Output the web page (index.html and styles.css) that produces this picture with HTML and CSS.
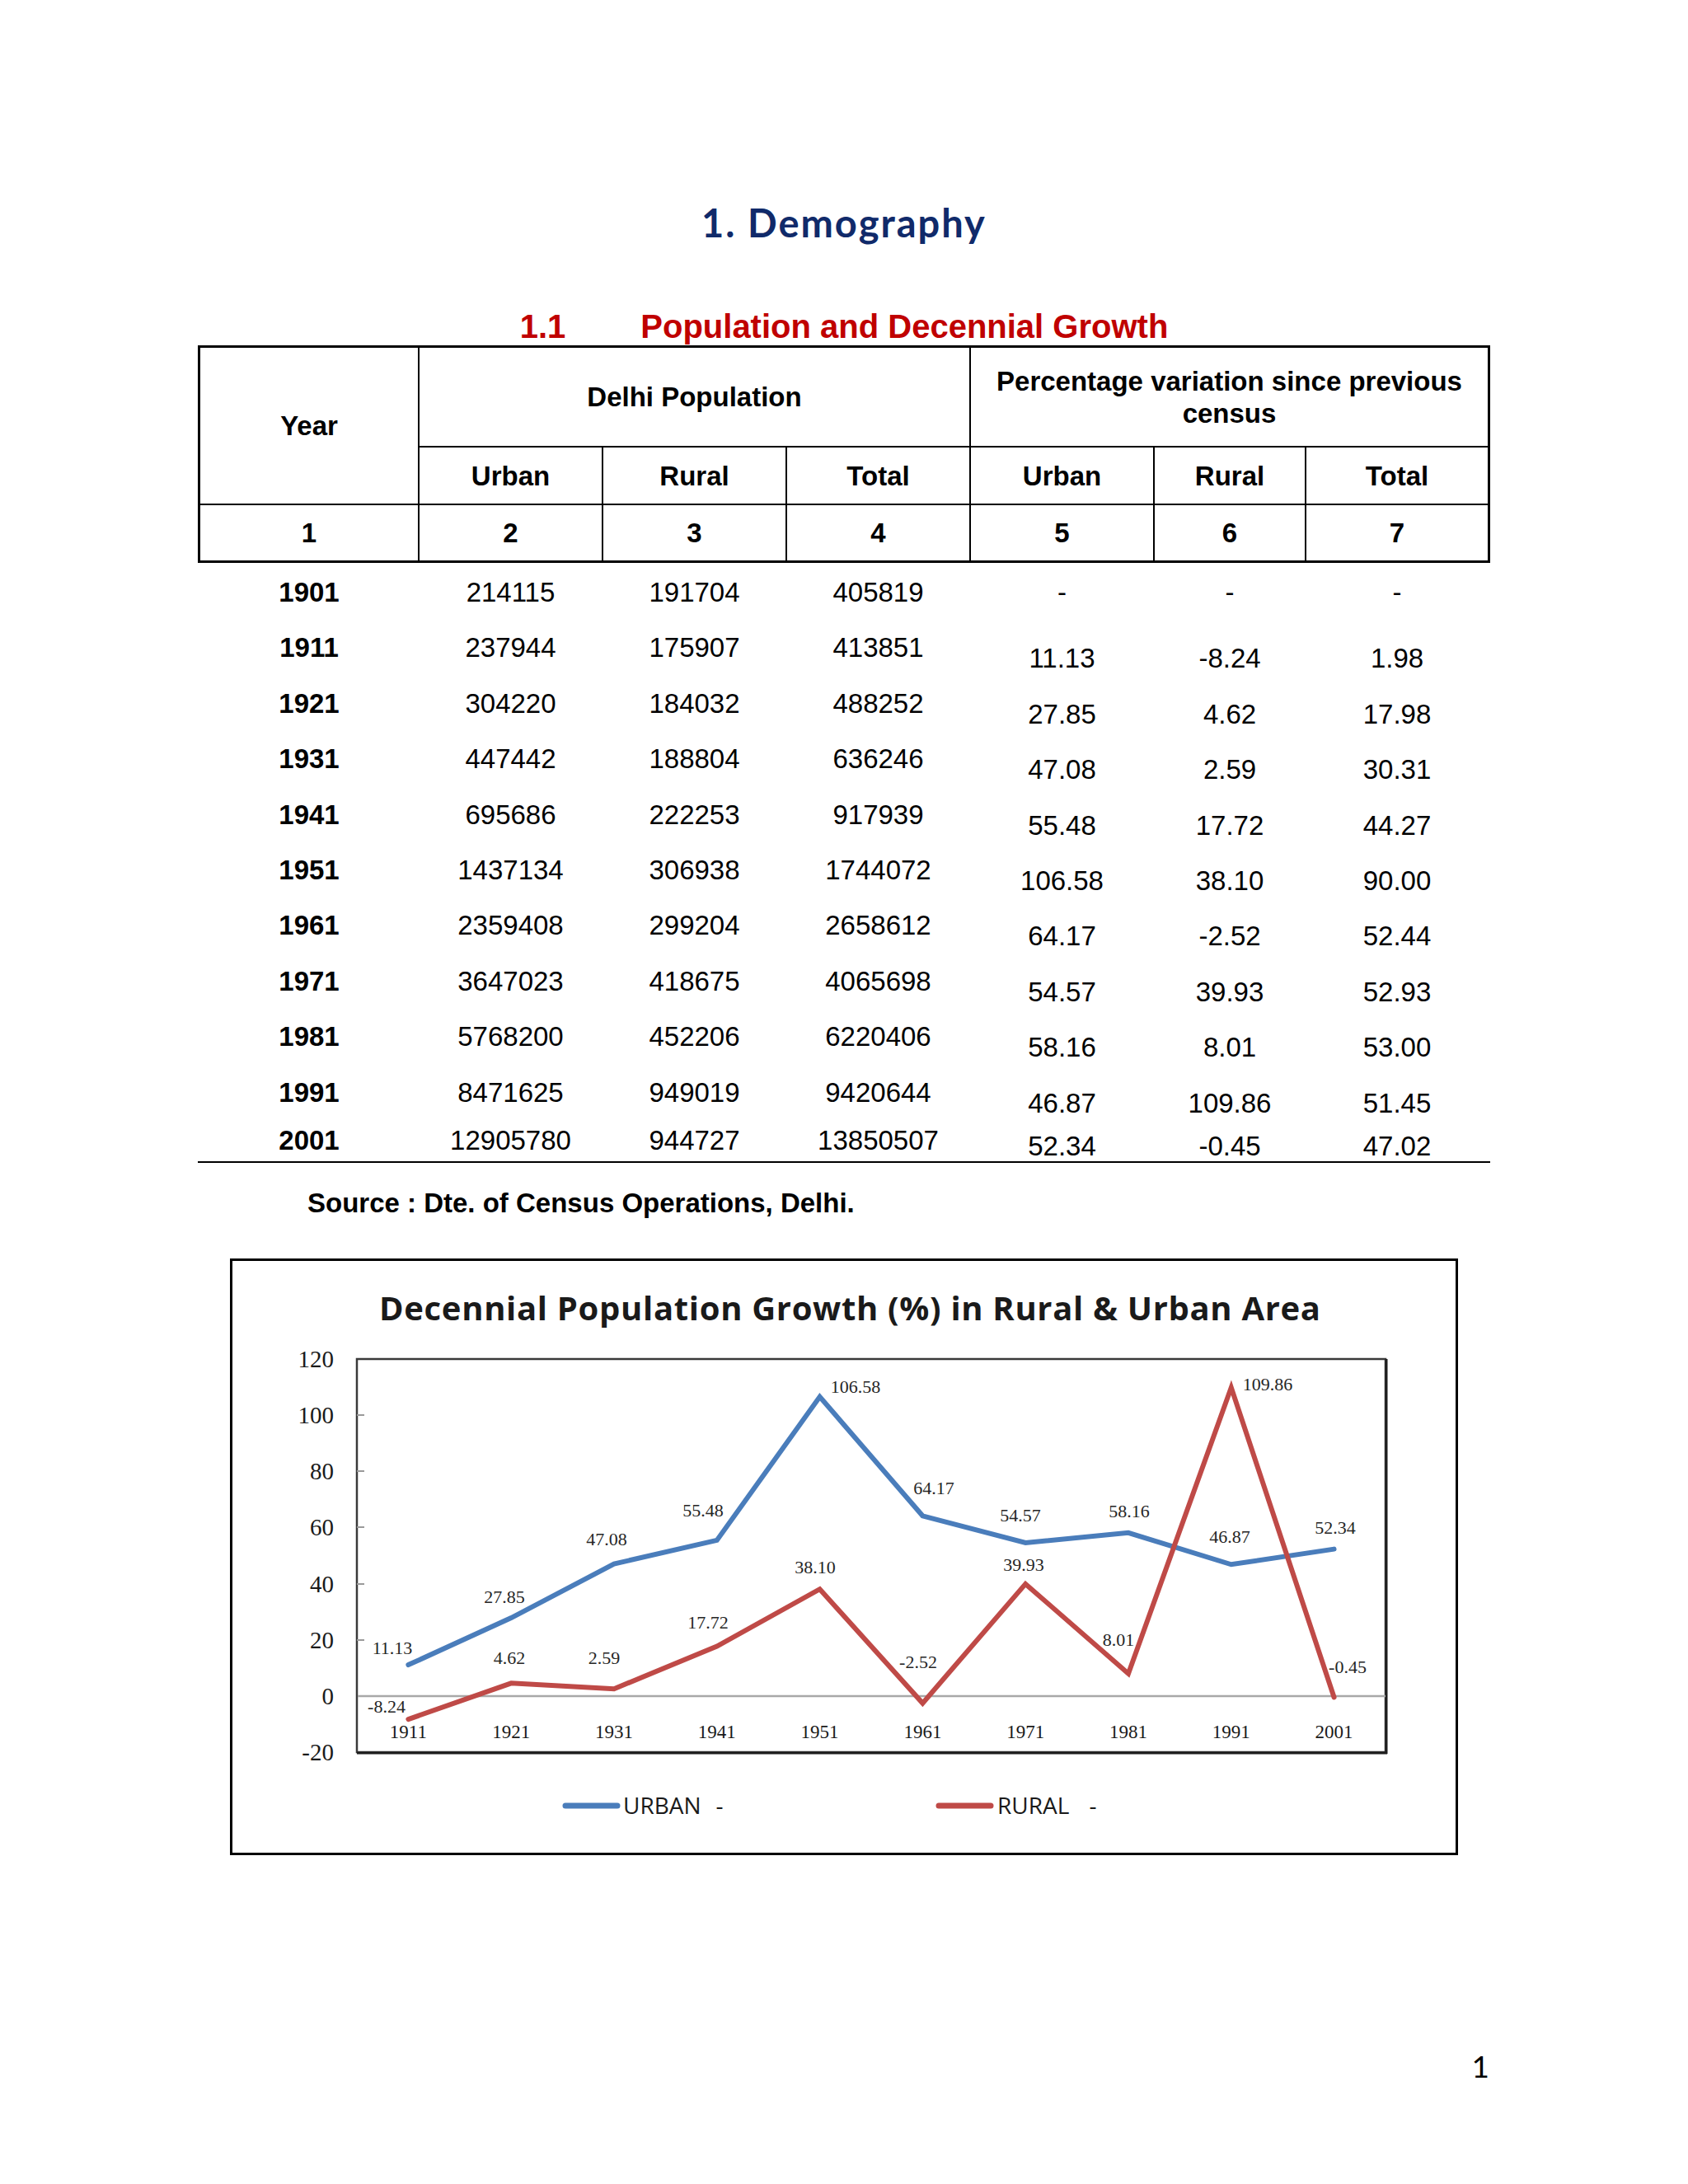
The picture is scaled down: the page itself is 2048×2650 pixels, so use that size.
FILE: index.html
```html
<!DOCTYPE html>
<html lang="en">
<head>
<meta charset="utf-8">
<title>1. Demography</title>
<link rel="stylesheet" href="styles.css">
</head>
<body>
<div class="page">
  <h1 class="title">1. Demography</h1>
  <h2 class="subtitle"><span>1.1</span><span>Population and Decennial Growth</span></h2>

  <div class="thead">
    <div class="hcell year">Year</div>
    <div class="hcell grp1">Delhi Population</div>
    <div class="hcell grp2">Percentage variation since previous census</div>
    <div class="hcell">Urban</div>
    <div class="hcell">Rural</div>
    <div class="hcell">Total</div>
    <div class="hcell">Urban</div>
    <div class="hcell">Rural</div>
    <div class="hcell">Total</div>
    <div class="hcell">1</div>
    <div class="hcell">2</div>
    <div class="hcell">3</div>
    <div class="hcell">4</div>
    <div class="hcell">5</div>
    <div class="hcell">6</div>
    <div class="hcell">7</div>
  </div>

  <div class="tbody">
    <div class="row first"><div class="cell yr">1901</div><div class="cell">214115</div><div class="cell">191704</div><div class="cell">405819</div><div class="cell pct">-</div><div class="cell pct">-</div><div class="cell pct">-</div></div>
    <div class="row"><div class="cell yr">1911</div><div class="cell">237944</div><div class="cell">175907</div><div class="cell">413851</div><div class="cell pct">11.13</div><div class="cell pct">-8.24</div><div class="cell pct">1.98</div></div>
    <div class="row"><div class="cell yr">1921</div><div class="cell">304220</div><div class="cell">184032</div><div class="cell">488252</div><div class="cell pct">27.85</div><div class="cell pct">4.62</div><div class="cell pct">17.98</div></div>
    <div class="row"><div class="cell yr">1931</div><div class="cell">447442</div><div class="cell">188804</div><div class="cell">636246</div><div class="cell pct">47.08</div><div class="cell pct">2.59</div><div class="cell pct">30.31</div></div>
    <div class="row"><div class="cell yr">1941</div><div class="cell">695686</div><div class="cell">222253</div><div class="cell">917939</div><div class="cell pct">55.48</div><div class="cell pct">17.72</div><div class="cell pct">44.27</div></div>
    <div class="row"><div class="cell yr">1951</div><div class="cell">1437134</div><div class="cell">306938</div><div class="cell">1744072</div><div class="cell pct">106.58</div><div class="cell pct">38.10</div><div class="cell pct">90.00</div></div>
    <div class="row"><div class="cell yr">1961</div><div class="cell">2359408</div><div class="cell">299204</div><div class="cell">2658612</div><div class="cell pct">64.17</div><div class="cell pct">-2.52</div><div class="cell pct">52.44</div></div>
    <div class="row"><div class="cell yr">1971</div><div class="cell">3647023</div><div class="cell">418675</div><div class="cell">4065698</div><div class="cell pct">54.57</div><div class="cell pct">39.93</div><div class="cell pct">52.93</div></div>
    <div class="row"><div class="cell yr">1981</div><div class="cell">5768200</div><div class="cell">452206</div><div class="cell">6220406</div><div class="cell pct">58.16</div><div class="cell pct">8.01</div><div class="cell pct">53.00</div></div>
    <div class="row"><div class="cell yr">1991</div><div class="cell">8471625</div><div class="cell">949019</div><div class="cell">9420644</div><div class="cell pct">46.87</div><div class="cell pct">109.86</div><div class="cell pct">51.45</div></div>
    <div class="row last"><div class="cell yr">2001</div><div class="cell">12905780</div><div class="cell">944727</div><div class="cell">13850507</div><div class="cell pct">52.34</div><div class="cell pct">-0.45</div><div class="cell pct">47.02</div></div>
  </div>

  <p class="source">Source : Dte. of Census Operations, Delhi.</p>

  <div class="chart">
    <svg class="chart-svg" width="1484" height="718" viewBox="282 1530 1484 718" xmlns="http://www.w3.org/2000/svg">
      <text class="ct-title" x="1031" y="1602" text-anchor="middle" textLength="1142" lengthAdjust="spacing">Decennial Population Growth (%) in Rural &amp; Urban Area</text>

      <rect x="433" y="1649" width="1248" height="477" fill="#fff" stroke="#3a3a3a" stroke-width="2.5"/>
      <line x1="433" y1="2127" x2="1683" y2="2127" stroke="#1e1e1e" stroke-width="3"/>
      <line x1="1682" y1="1649" x2="1682" y2="2128" stroke="#1e1e1e" stroke-width="3"/>
      <line x1="434" y1="2058" x2="1681" y2="2058" stroke="#a8a8a8" stroke-width="2.5"/>

      <g stroke="#9a9a9a" stroke-width="2">
        <line x1="433" y1="1717" x2="442" y2="1717"/>
        <line x1="433" y1="1785" x2="442" y2="1785"/>
        <line x1="433" y1="1853" x2="442" y2="1853"/>
        <line x1="433" y1="1922" x2="442" y2="1922"/>
        <line x1="433" y1="1990" x2="442" y2="1990"/>
      </g>

      <g class="ct-ylab" text-anchor="end">
        <text x="405" y="1659">120</text>
        <text x="405" y="1727">100</text>
        <text x="405" y="1795">80</text>
        <text x="405" y="1863">60</text>
        <text x="405" y="1932">40</text>
        <text x="405" y="2000">20</text>
        <text x="405" y="2068">0</text>
        <text x="405" y="2136">-20</text>
      </g>

      <g class="ct-xlab" text-anchor="middle">
        <text x="495.4" y="2109">1911</text>
        <text x="620.2" y="2109">1921</text>
        <text x="745" y="2109">1931</text>
        <text x="869.8" y="2109">1941</text>
        <text x="994.6" y="2109">1951</text>
        <text x="1119.4" y="2109">1961</text>
        <text x="1244.2" y="2109">1971</text>
        <text x="1369" y="2109">1981</text>
        <text x="1493.8" y="2109">1991</text>
        <text x="1618.6" y="2109">2001</text>
      </g>

      <polyline fill="none" stroke="#4a7dbb" stroke-width="6" stroke-linecap="round" stroke-linejoin="miter"
        points="495.4,2020.1 620.2,1963.1 745,1897.6 869.8,1868.9 994.6,1694.8 1119.4,1839.3 1244.2,1872 1369,1859.8 1493.8,1898.3 1618.6,1879.6"/>
      <polyline fill="none" stroke="#bf4a47" stroke-width="6" stroke-linecap="round" stroke-linejoin="miter"
        points="495.4,2086.1 620.2,2042.3 745,2049.2 869.8,1997.6 994.6,1928.2 1119.4,2066.6 1244.2,1921.9 1369,2030.7 1493.8,1683.6 1618.6,2059.5"/>

      <g class="ct-dlab" text-anchor="middle">
        <text x="476" y="2007">11.13</text>
        <text x="612" y="1945">27.85</text>
        <text x="736" y="1875">47.08</text>
        <text x="853" y="1840">55.48</text>
        <text x="1038" y="1690">106.58</text>
        <text x="1133" y="1813">64.17</text>
        <text x="1238" y="1846">54.57</text>
        <text x="1370" y="1841">58.16</text>
        <text x="1492" y="1872">46.87</text>
        <text x="1620" y="1861">52.34</text>

        <text x="469" y="2078">-8.24</text>
        <text x="618" y="2019">4.62</text>
        <text x="733" y="2019">2.59</text>
        <text x="859" y="1976">17.72</text>
        <text x="989" y="1909">38.10</text>
        <text x="1114" y="2024">-2.52</text>
        <text x="1242" y="1906">39.93</text>
        <text x="1357" y="1997">8.01</text>
        <text x="1538" y="1687">109.86</text>
        <text x="1635" y="2030">-0.45</text>
      </g>

      <line x1="686" y1="2191" x2="749" y2="2191" stroke="#4a7dbb" stroke-width="7" stroke-linecap="round"/>
      <text class="ct-leg" x="756" y="2201">URBAN</text>
      <text class="ct-leg" x="873" y="2201" text-anchor="middle">-</text>
      <line x1="1139" y1="2191" x2="1202" y2="2191" stroke="#bf4a47" stroke-width="7" stroke-linecap="round"/>
      <text class="ct-leg" x="1210" y="2201">RURAL</text>
      <text class="ct-leg" x="1326" y="2201" text-anchor="middle">-</text>
    </svg>
  </div>

  <div class="pageno">1</div>
</div>
</body>
</html>
```

FILE: styles.css
```css
html, body {
  margin: 0;
  padding: 0;
  background: #ffffff;
}

.page {
  width: 1568px;
  margin: 0 auto;
  padding-top: 242px;
  font-family: "Liberation Sans", Arial, sans-serif;
  color: #000;
}

.title {
  margin: 0;
  font-family: Lato, "Noto Sans", sans-serif;
  font-weight: 700;
  font-size: 47px;
  line-height: 56px;
  letter-spacing: 2px;
  color: #102a6a;
  text-align: center;
}

.subtitle {
  margin: 75px 0 0 0;
  display: flex;
  justify-content: center;
  gap: 91px;
  font-family: "Liberation Sans", Arial, sans-serif;
  font-weight: 700;
  font-size: 40px;
  line-height: 46px;
  color: #c00000;
}

.thead {
  display: grid;
  grid-template-columns: 264px 221px 221px 221px 221px 182px 220px;
  grid-template-rows: 119px 68px 67px;
  gap: 2px;
  background: #000;
  border: 3px solid #000;
}

.hcell {
  background: #fff;
  display: flex;
  align-items: center;
  justify-content: center;
  text-align: center;
  font-weight: 700;
  font-size: 33px;
  line-height: 39px;
}

.hcell.year {
  grid-row: 1 / span 2;
}

.hcell.grp1 {
  grid-column: 2 / span 3;
}

.hcell.grp2 {
  grid-column: 5 / span 3;
  padding: 0 20px;
}

.row {
  display: grid;
  grid-template-columns: 264px 221px 221px 221px 221px 182px 220px;
  column-gap: 2px;
  padding: 0 3px;
  height: 67.4px;
  align-items: start;
}

.cell {
  text-align: center;
  font-size: 33px;
  line-height: 38px;
  padding-top: 17px;
}

.cell.yr {
  font-weight: 700;
}

.cell.pct {
  padding-top: 30px;
}

.row.first .cell.pct {
  padding-top: 17px;
}

.row.last {
  height: 52px;
  border-bottom: 2px solid #000;
}

.row.last .cell {
  padding-top: 8px;
}

.row.last .cell.pct {
  padding-top: 15px;
}

.source {
  margin: 30px 0 0 133px;
  font-weight: 700;
  font-size: 33px;
  line-height: 38px;
}

.chart {
  width: 1484px;
  height: 718px;
  border: 3px solid #000;
  margin: 48px auto 0 auto;
  background: #fff;
}

.chart-svg {
  display: block;
}

.ct-title {
  font-family: "Open Sans", "Liberation Sans", sans-serif;
  font-weight: 700;
  font-size: 40px;
  fill: #1a1a1a;
}

.ct-ylab {
  font-family: "Liberation Serif", "DejaVu Serif", serif;
  font-size: 29px;
  fill: #1a1a1a;
}

.ct-xlab {
  font-family: "Liberation Serif", "DejaVu Serif", serif;
  font-size: 23px;
  fill: #1a1a1a;
}

.ct-dlab {
  font-family: "Liberation Serif", "DejaVu Serif", serif;
  font-size: 22px;
  fill: #262626;
}

.ct-leg {
  font-family: "Open Sans", "Liberation Sans", sans-serif;
  font-size: 28px;
  fill: #1a1a1a;
}

.pageno {
  margin-top: 234px;
  padding-right: 1px;
  text-align: right;
  font-family: Lato, "Noto Sans", sans-serif;
  font-weight: 400;
  font-size: 37px;
  line-height: 44px;
}
```
